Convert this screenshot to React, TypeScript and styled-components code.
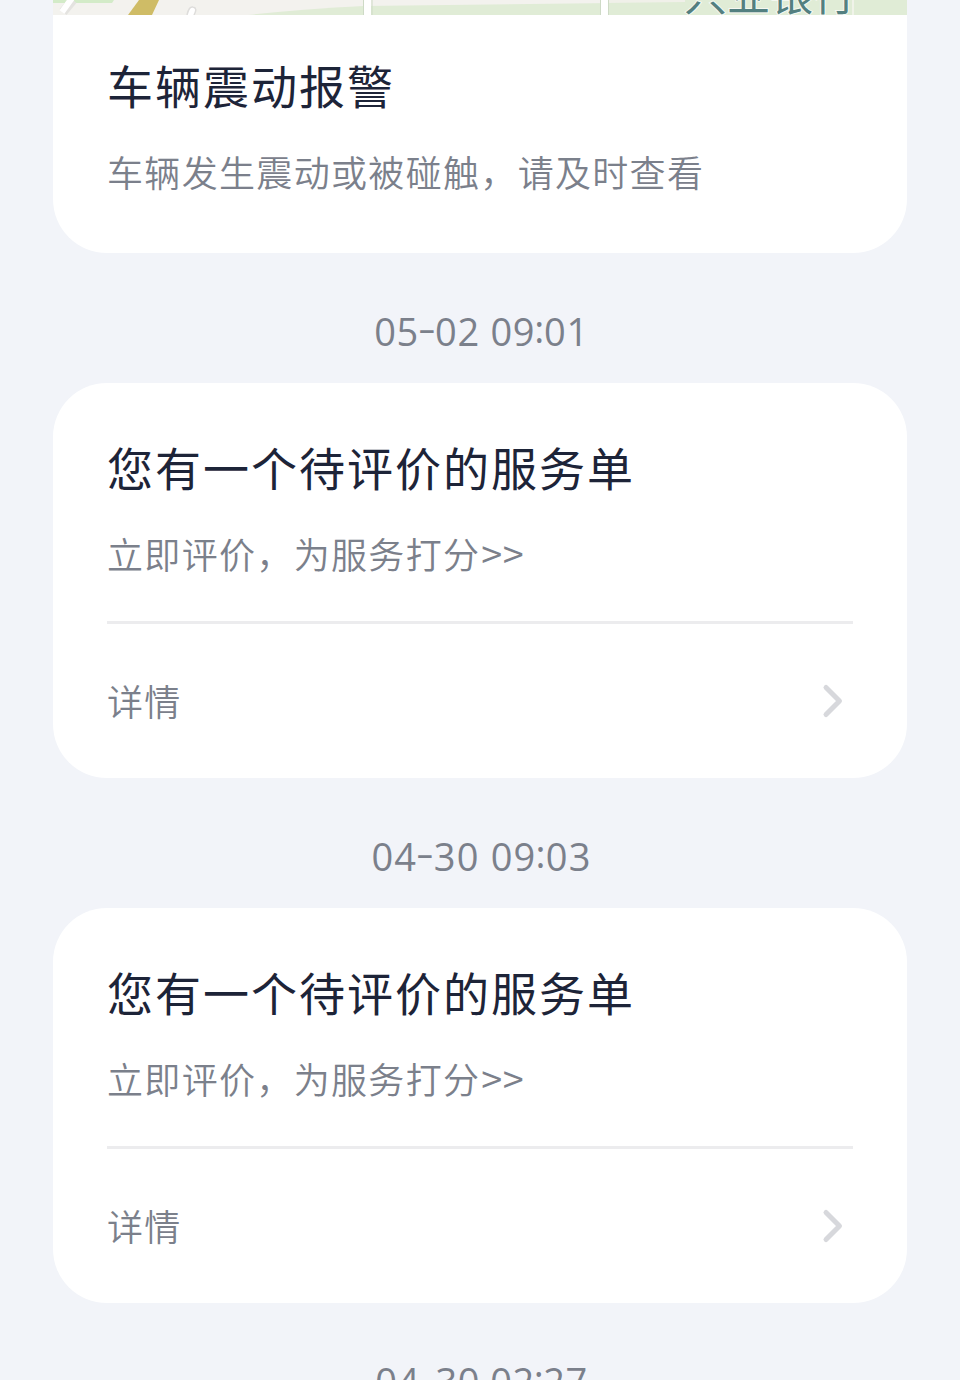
import React from "react";
import styled, { createGlobalStyle } from "styled-components";

const GlobalStyle = createGlobalStyle`
  * { box-sizing: border-box; }
  body {
    margin: 0;
    background: #f2f4f9;
    font-family: "Noto Sans CJK SC", sans-serif;
  }
`;

const Feed = styled.main`
  width: 960px;
  height: 1380px;
  padding: 0 53px;
  overflow: hidden;
  display: flex;
  flex-direction: column;
  background: #f2f4f9;
`;

const Card = styled.article<{ $continued?: boolean }>`
  flex: none;
  height: ${(p) => (p.$continued ? 253 : 395)}px;
  border-radius: ${(p) => (p.$continued ? "0 0 54px 54px" : "54px")};
  background: #fff;
  overflow: hidden;
`;

const MapStrip = styled.svg`
  display: block;
  width: 854px;
  height: 15px;
`;

const CardText = styled.div<{ $top: number }>`
  padding: ${(p) => p.$top}px 54px 0;
`;

const Title = styled.h2`
  margin: 0;
  height: 64px;
  line-height: 64px;
  font-size: 46px;
  font-weight: 400;
  letter-spacing: 2px;
  color: #1d2438;
  white-space: nowrap;
`;

const Summary = styled.p`
  margin: 30px 0 0;
  height: 50px;
  line-height: 50px;
  font-size: 36px;
  font-weight: 350;
  letter-spacing: 1.33px;
  color: #7b808b;
  white-space: nowrap;
`;

const Arrows = styled.span`
  margin-left: 1px;
  font-size: 38px;
  line-height: 1;
  letter-spacing: 0.5px;
`;

const DetailRow = styled.div`
  margin: 43px 54px 0;
  height: 156px;
  border-top: 3px solid #ececee;
  display: flex;
  align-items: center;
  justify-content: space-between;
  font-size: 36px;
  font-weight: 350;
  letter-spacing: 1.33px;
  color: #7b808b;
`;

const DetailLabel = styled.span`
  padding-bottom: 2px;
`;

const Chevron = styled.svg`
  width: 24px;
  height: 36px;
  margin-right: 8px;
`;

const DateLine = styled.time<{ $spacing: number }>`
  flex: none;
  height: 130px;
  padding: 48px 0 0 3px;
  line-height: 60px;
  text-align: center;
  font-family: "Open Sans", sans-serif;
  font-size: 38px;
  letter-spacing: ${(p) => p.$spacing}px;
  color: #7b808b;
  white-space: nowrap;
`;

const Dash = styled.span`
  display: inline-block;
  margin: 0 1px 0 2px;
  line-height: 1;
  transform: translateY(-4px) scaleX(1.45);
`;

const Colon = styled.span`
  display: inline-block;
  margin: 0 -1px;
  line-height: 1;
  transform: translateY(-3px);
`;

function MapPreview() {
  return (
    <MapStrip viewBox="0 0 854 15">
      <rect width="854" height="15" fill="#f3f2ee" />
      <path d="M0 0H61L59 3H0Z" fill="#d3ebc8" />
      <path d="M10 12L20 0" stroke="#e4e3e0" strokeWidth="9" />
      <path d="M9 12L19 -2" stroke="#fff" strokeWidth="6" />
      <path d="M75 15L86 0H106L99 15Z" fill="#cfbc66" />
      <path d="M134 15Q136 6 140 7Q145 8 141 15" fill="#fff" stroke="#dedddb" strokeWidth="1.5" />
      <path d="M195 15Q250 9 311 6L560 3L854 0V15Z" fill="#e0ecd6" />
      <path d="M550 0H854V15H550Z" fill="#e0ecd6" />
      <path d="M550 0H632V2L550 3Z" fill="#f0f0e9" />
      <path d="M311 0H318V15H311ZM548 0H555V15H548Z" fill="#fff" />
      <path d="M310.500 0V15M319 0V15M547.500 0V15M555.500 0V15" stroke="#cedac6" />
      <path d="M800 0V15" stroke="#f0f3e9" strokeWidth="2" />
      <text
        x="631"
        y="11"
        fontSize="43"
        fontWeight="400"
        fill="#538080"
        stroke="#f5f8f1"
        strokeWidth="2"
        paintOrder="stroke"
      >
        兴业银行
      </text>
    </MapStrip>
  );
}

function DateStamp({ day, time, spacing }: { day: string; time: string; spacing: number }) {
  const [month, date] = day.split("-");
  const [hour, minute] = time.split(":");
  return (
    <DateLine $spacing={spacing}>
      {month}
      <Dash>-</Dash>
      {date} {hour}
      <Colon>:</Colon>
      {minute}
    </DateLine>
  );
}

function ServiceCard() {
  return (
    <Card>
      <CardText $top={51}>
        <Title>您有一个待评价的服务单</Title>
        <Summary>
          立即评价，为服务打分<Arrows>&gt;&gt;</Arrows>
        </Summary>
      </CardText>
      <DetailRow>
        <DetailLabel>详情</DetailLabel>
        <Chevron viewBox="0 0 24 36" fill="none">
          <path
            d="M5 4.500L18.500 18L5 31.500"
            stroke="#d7d8dc"
            strokeWidth="5"
            strokeLinecap="round"
            strokeLinejoin="round"
          />
        </Chevron>
      </DetailRow>
    </Card>
  );
}

export default function App() {
  return (
    <>
      <GlobalStyle />
      <Feed>
        <Card $continued>
          <MapPreview />
          <CardText $top={37}>
            <Title>车辆震动报警</Title>
            <Summary>车辆发生震动或被碰触，请及时查看</Summary>
          </CardText>
        </Card>
        <DateStamp day="05-02" time="09:01" spacing={0.7} />
        <ServiceCard />
        <DateStamp day="04-30" time="09:03" spacing={1.2} />
        <ServiceCard />
        <DateStamp day="04-30" time="02:27" spacing={0.5} />
      </Feed>
    </>
  );
}
